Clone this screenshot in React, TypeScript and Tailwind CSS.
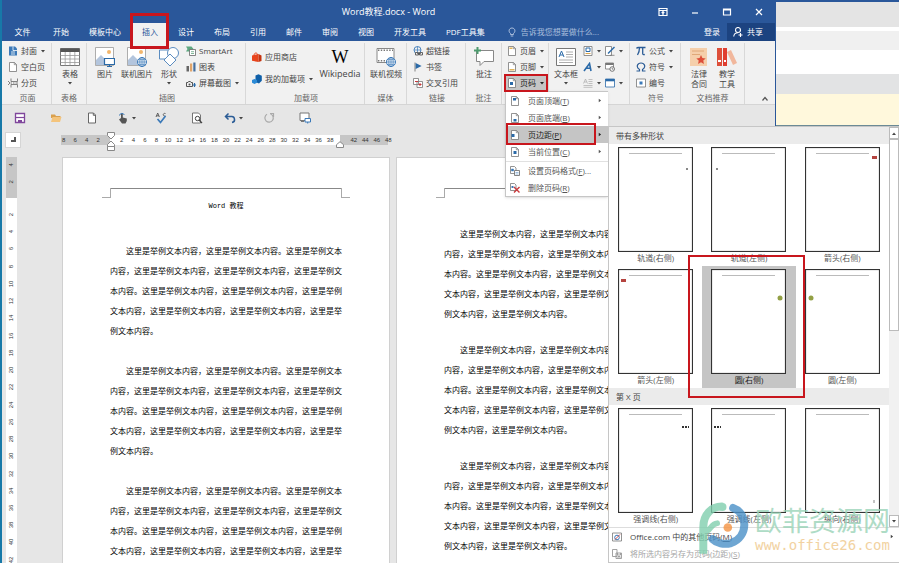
import type { ReactNode } from 'react';
import clsx from 'clsx';

const S = '这里是举例文本内容';
const PARAGRAPH = '，。，，，。，，，，，'.split('').map((p) => S + p).join('');

function Caret({ className }: { className?: string }) {
  return (
    <svg viewBox="0 0 4 3" className={clsx('h-[3px] w-1 shrink-0', className)}>
      <path d="M0 0h4L2 2.6z" fill="currentColor" />
    </svg>
  );
}

function Icon({ children, big }: { children: ReactNode; big?: boolean }) {
  return (
    <svg viewBox={big ? '0 0 20 20' : '0 0 10 10'} className={clsx('shrink-0', big ? 'size-5' : 'size-[10px]')} fill="none">
      {children}
    </svg>
  );
}

function PageIcon({ mark, color = '#2b6aa8' }: { mark?: string; color?: string }) {
  return (
    <Icon>
      <path d="M1.5.5h5l2 2v7h-7z" fill="#fff" stroke="#777" strokeWidth=".8" />
      <path d="M6.3.6v2.1h2.2" stroke="#777" strokeWidth=".7" />
      {mark && <path d={mark} fill={color} />}
    </Icon>
  );
}

const coverIcon = (
  <Icon>
    <path d="M1 .5h6l2 2v7H1z" fill="#3b79b8" />
    <path d="M5 .5v4h4M3 6h4M3 8h4" stroke="#fff" strokeWidth=".8" />
  </Icon>
);

const breakIcon = (
  <Icon>
    <path d="M3 .5v3h6.500v-3M3 9.500v-3h6.500v3M2.500 5h1.500M5 5h1.500M7.500 5h2.500M0 3l2 2-2 2" stroke="#666" strokeWidth=".8" />
  </Icon>
);

const tableIcon = (
  <Icon big>
    <path d="M.5 1.5h19v17H.5z" fill="#fff" stroke="#777" />
    <path d="M.5 1.5h19v3.5H.5z" fill="#555" />
    <path d="M.5 8.5h19M.5 12h19M.5 15.5h19M5.2 5v13.5M10 5v13.5M14.8 5v13.5" stroke="#999" strokeWidth=".8" />
  </Icon>
);

const pictureBase = (
  <>
    <path d="M.5.5h18v18H.5z" fill="#fff" stroke="#999" strokeWidth=".8" />
    <circle cx="14" cy="5" r="2" fill="#f2b66c" />
    <path d="M1 18V13l5-5 6 6 2 4z" fill="#b3c5dd" />
  </>
);

const pictureIcon = (
  <Icon big>
    {pictureBase}
    <path d="M9.5 11.5h10v6h-10z" fill="#fff" stroke="#2b6aa8" strokeWidth="1.2" />
    <path d="M14.5 17.5v2M12 19.5h5" stroke="#2b6aa8" />
  </Icon>
);

const globe = (
  <>
    <circle cx="15" cy="15" r="4.5" fill="#fff" stroke="#3b79b8" />
    <path d="M10.5 15h9M15 10.5v9M11.5 12.7h7M11.5 17.3h7" stroke="#3b79b8" strokeWidth=".7" />
    <ellipse cx="15" cy="15" rx="2.2" ry="4.5" stroke="#3b79b8" strokeWidth=".7" />
  </>
);

const onlinePictureIcon = (
  <Icon big>
    {pictureBase}
    {globe}
  </Icon>
);

const shapesIcon = (
  <Icon big>
    <path d="M.5 3h9v9h-9z" fill="#fff" stroke="#5b8cc0" />
    <circle cx="14" cy="6" r="5.5" fill="#fff" stroke="#5b8cc0" />
    <path d="m11 7 6 6-6 6-6-6z" fill="#fff" stroke="#5b8cc0" />
  </Icon>
);

const smartArtIcon = (
  <Icon>
    <path d="M0 .5h5.500L7.500 3 5 5.500H0L1.500 3z" fill="#5ea880" />
    <path d="M3.500 3.500h6v6h-6z" fill="#fff" stroke="#666" strokeWidth=".8" />
    <path d="M5 5.700h3M5 7.500h3" stroke="#4e9a6e" strokeWidth=".7" />
  </Icon>
);

const chartIcon = (
  <Icon>
    <path d="M.5 4H3v5.5H.5z" fill="#666" />
    <path d="M4 1.5h2.2v8H4z" fill="#e0a56b" />
    <path d="M7.3.5h2.2v9H7.3z" fill="#456f9e" />
  </Icon>
);

const captureIcon = (
  <Icon>
    <path d="M.5 4.5h1.5l.6-1h1.8l.6 1H6.5v4h-6z" stroke="#555" />
    <circle cx="3.5" cy="6.5" r="1" fill="#555" />
    <path d="M8.500 5v4M6.700 7h3.300" stroke="#2b6aa8" strokeWidth="1.2" />
  </Icon>
);

const storeIcon = (
  <Icon>
    <path d="M0 3.5 6.5 2v8L0 8.8z" fill="#e8441c" />
    <path d="M6.5 2 9.5 3.5V9l-3 1z" fill="#c4330f" />
    <path d="M2 3.5C2 .3 5.5.3 5.5 2.8" stroke="#e8441c" />
  </Icon>
);

const addinIcon = (
  <Icon>
    <path d="m3.5 1.5 3-1.3L9.8 1.8v5L7 9.5 3.5 8z" fill="#0f5fa8" />
    <path d="m0 6 2.5-1L5 6v2.7L2.5 9.9 0 8.7z" fill="#2b8ad6" />
  </Icon>
);

const videoIcon = (
  <Icon big>
    <path d="M1 1.5h17v14H1z" fill="#fff" stroke="#888" />
    <path d="M2 3.200h15M2 13.800h15" stroke="#777" strokeWidth="1.400" strokeDasharray="1.400 1.400" />
    {globe}
  </Icon>
);

const linkIcon = (
  <Icon>
    <circle cx="4.5" cy="4" r="3.5" stroke="#3b79b8" strokeWidth=".9" />
    <path d="M1 4h7M4.5.5v7" stroke="#3b79b8" strokeWidth=".7" />
    <path d="M2.5 6.5h3v2.5h-3zM6.5 6.5h3v2.5h-3zM4 7.7h4" fill="#f1f1f1" stroke="#555" strokeWidth=".9" />
  </Icon>
);

const bookmarkIcon = (
  <Icon>
    <path d="M2 .5v9" stroke="#777" strokeWidth=".9" />
    <path d="m2.6 1 6 3-6 3z" fill="#2b6aa8" />
  </Icon>
);

const crossRefIcon = (
  <Icon>
    <path d="M.5.5h5v6h-5zM4 3.5h5.5v6H4z" fill="#fff" stroke="#777" strokeWidth=".8" />
    <path d="M2 3.5h3M5.5 6.5h3M7 5v3" stroke="#c8383b" />
  </Icon>
);

const commentIcon = (
  <Icon big>
    <path d="M2.5 3.500h17v11H10l-4 4v-4H2.500z" fill="#fff" stroke="#888" />
    <path d="M3.500 0v7M0 3.500h7" stroke="#4e9a6e" strokeWidth="2" />
  </Icon>
);

const textBoxIcon = (
  <Icon big>
    <path d="M.5 1.5h19v17H.5z" fill="#fff" stroke="#777" />
    <path d="m3 10 2.5-6L8 10M3.9 8h3.2" stroke="#2b6aa8" />
    <path d="M10 5h7M10 7.5h7M10 10h7M3 13h14M3 15.5h14" stroke="#999" strokeWidth=".8" />
  </Icon>
);

const quickPartsIcon = (
  <Icon>
    <path d="M1 .5h8v9H1z" fill="#fff" stroke="#777" strokeWidth=".8" />
    <path d="M3 2h4v3.5H3z" stroke="#2b6aa8" />
    <path d="M2.5 7.5h5" stroke="#d8a24a" />
  </Icon>
);

const wordArtIcon = (
  <Icon>
    <path d="M1 9 6.5 1.5 8 9M3.2 6.3h4.3" stroke="#2b6aa8" strokeWidth="1.6" />
  </Icon>
);

const dropCapIcon = (
  <Icon>
    <path d="m.5 5.5 2-4.5 2 4.5M1.3 4h2.4M5.5 1.5h4M5.5 3.5h4M5.5 5.5h4M.5 7.5h9M.5 9.3h9" stroke="#aaa" strokeWidth=".7" />
  </Icon>
);

const signatureIcon = (
  <Icon>
    <path d="M.5.5h6v9h-6z" fill="#fff" stroke="#777" strokeWidth=".8" />
    <path d="M3 7.5 9.5 1" stroke="#2b6aa8" strokeWidth="1.5" />
    <path d="M5 9.3h4.5" stroke="#777" strokeWidth=".8" />
  </Icon>
);

const dateIcon = (
  <Icon>
    <path d="M.5 1h8v6h-8z" fill="#fff" stroke="#777" strokeWidth=".8" />
    <path d="M.5 1h8v2h-8z" fill="#777" />
    <circle cx="7.2" cy="7" r="2.3" fill="#fff" stroke="#555" strokeWidth=".8" />
    <path d="M7.2 5.7v1.5h1.2" stroke="#555" strokeWidth=".7" />
  </Icon>
);

const objectIcon = (
  <Icon>
    <path d="M.5 1h9v8h-9z" fill="#fff" stroke="#2b6aa8" strokeWidth=".8" />
    <path d="M.5 1h9v2.3h-9z" fill="#2b6aa8" />
  </Icon>
);

const piIcon = (
  <Icon>
    <path d="M.5 2.5Q1 1.5 2.5 1.5H9.5M3.5 1.5Q3.5 6 1.5 9M6.7 1.5V7.5Q6.7 9 8.8 8.5" stroke="#2b5c96" strokeWidth="1.3" />
  </Icon>
);

const omegaIcon = (
  <Icon>
    <path d="M.5 9h3V7.5C-.5 5 1.5 1 5 1s5.5 4 1.5 6.5V9h3" stroke="#2b5c96" strokeWidth="1.2" />
  </Icon>
);

const numberIcon = (
  <Icon>
    <path d="M.5 1h9v8h-9z" fill="#fff" stroke="#777" strokeWidth=".8" />
    <path d="M3.5 3.5h3v3h-3z" fill="#3b79b8" />
  </Icon>
);

const contractIcon = (
  <Icon big>
    <path d="M1 1h17v18H1z" fill="#f5cfab" />
    <path d="M3 4h12M3 7.5h8" stroke="#e0a878" />
    <path d="m12 8 1.4 3 3.3.4-2.4 2.2.6 3.3-2.9-1.6-2.9 1.6.6-3.3-2.4-2.2 3.3-.4z" fill="#dd4f3a" />
  </Icon>
);

const teachIcon = (
  <Icon big>
    <path d="M0 1h5v18H0z" fill="#dd4f3a" />
    <path d="M6 1h4v18H6z" fill="#e03e30" />
    <path d="M1 14h3M7 14h2" stroke="#fff" strokeWidth="2" />
    <path d="m10 5 4-2 6 13-4 2z" fill="#f1b79c" />
  </Icon>
);

const pageNumberItems = [
  { text: '页面顶端', hotkey: 'T', mark: 'M3 2h3v2.5H3z' },
  { text: '页面底端', hotkey: 'B', mark: 'M3.5 6h3v2.5h-3z' },
  { text: '页边距', hotkey: 'P', mark: 'M1.5 4h3v3h-3z', active: true },
  { text: '当前位置', hotkey: 'C', mark: 'M3.5 4h3v3h-3z' },
];

function Hotkey({ text, hotkey, tail }: { text: string; hotkey: string; tail?: string }) {
  return (
    <span>
      {text}(<u>{hotkey}</u>){tail}
    </span>
  );
}

const shapeThumbs = [
  { label: '轨道(右侧)', mark: <path d="M68 21h2v2h-2z" fill="#888" /> },
  { label: '轨道(左侧)', mark: <path d="M5 21h2v2H5z" fill="#888" /> },
  { label: '箭头(右侧)', mark: <path d="M67 9h5v3h-5z" fill="#b5433f" /> },
  { label: '箭头(左侧)', mark: <path d="M3 10h5v3H3z" fill="#b5433f" /> },
  { label: '圆(右侧)', mark: <circle cx="69" cy="29" r="2.5" fill="#93a045" />, active: true },
  { label: '圆(左侧)', mark: <circle cx="6" cy="29" r="2.5" fill="#93a045" /> },
];

const pageXThumbs = [
  { label: '强调线(右侧)', mark: <path d="M64 19h7" stroke="#333" strokeWidth="2" strokeDasharray="2 1" /> },
  { label: '强调线(左侧)', mark: <path d="M3 19h7" stroke="#333" strokeWidth="2" strokeDasharray="2 1" /> },
  { label: '纵向(右侧)', mark: <path d="M69 92v3" stroke="#888" /> },
];

function Thumb({ label, mark, active }: { label: string; mark: ReactNode; active?: boolean }) {
  return (
    <button className={clsx('relative flex h-[122px] flex-col items-center pt-[3px] leading-3', active ? 'bg-[#c5c5c5] text-[#222]' : 'text-[#555]')}>
      <svg viewBox="0 0 75 105" className="h-[105px] w-[75px]">
        <rect x=".5" y=".5" width="74" height="104" fill="#fff" stroke="#333" strokeWidth="1.2" />
        <path d="M11 6.5h53" stroke="#bbb" />
        {mark}
      </svg>
      {label}
      {active && <span className="absolute -top-[11px] -left-[14px] z-10 h-[143px] w-[117px] border-2 border-[#c8161d]" />}
    </button>
  );
}

function Gallery() {
  return (
    <div className="absolute top-0 left-full w-[291px] border border-r-0 border-[#c6c6c6] bg-white text-[#444]">
      <div className="flex">
        <div className="flex-1">
          <h3 className="h-[17px] bg-[#ebebeb] px-[7px] leading-[17px]">带有多种形状</h3>
          <div className="grid grid-cols-3">
            {shapeThumbs.map((t) => <Thumb key={t.label} {...t} />)}
          </div>
          <h3 className="h-[17px] bg-[#ebebeb] px-[7px] leading-[17px]">第 X 页</h3>
          <div className="grid grid-cols-3">
            {pageXThumbs.map((t) => <Thumb key={t.label} {...t} />)}
          </div>
        </div>
        <div className="flex w-[10px] flex-col bg-[#f1f1f1]">
          <button aria-label="向上" className="flex h-3 items-center justify-center border border-[#bbb] bg-white">
            <Caret className="rotate-180" />
          </button>
          <div className="h-[192px] border border-[#bbb] bg-white" />
          <button aria-label="向下" className="mt-auto flex h-3 items-center justify-center border border-[#bbb] bg-white">
            <Caret />
          </button>
        </div>
      </div>
      <div className="border-t border-[#ddd] px-[3px]">
        <button className="flex h-[17px] w-full items-center gap-2">
          <Icon>
            <path d="M.5 1h9v8h-9z" fill="#fff" stroke="#777" strokeWidth=".8" />
            <circle cx="5" cy="5.5" r="2.3" stroke="#3b79b8" />
            <path d="m3 7.5 5-5" stroke="#c8383b" strokeWidth=".9" />
          </Icon>
          <Hotkey text="Office.com 中的其他页码" hotkey="M" />
          <Caret className="mr-[2px] ml-auto -rotate-90" />
        </button>
        <button className="flex h-[17px] w-full items-center gap-2 text-[#a5a5a5]">
          <Icon>
            <path d="M.5.5h4.500v7H.5zM4 4h5.500v5.500H4zM5.500 4v2h3V4M6 9V7.500h2V9" stroke="#999" strokeWidth=".9" />
          </Icon>
          <Hotkey text="将所选内容另存为页码(边距)" hotkey="S" />
        </button>
      </div>
    </div>
  );
}

function PageNumberMenu() {
  return (
    <ul className="absolute top-4 left-0 z-20 w-[103px] border border-r-0 border-[#c6c6c6] bg-white text-[#555] shadow-sm">
      {pageNumberItems.map((item) => (
        <li key={item.text} className="relative">
          <button className={clsx('flex h-[17px] w-full items-center gap-2 pl-1', item.active && 'bg-[#c5c5c5] text-[#222]')}>
            <PageIcon mark={item.mark} />
            <Hotkey text={item.text} hotkey={item.hotkey} />
            <Caret className="mr-[6px] ml-auto -rotate-90" />
          </button>
          {item.active && (
            <>
              <span className="absolute -top-[3px] left-0 h-[22px] w-[90px] border-2 border-[#c8161d]" />
              <Gallery />
            </>
          )}
        </li>
      ))}
      <li className="mt-px border-t border-[#e1e1e1]">
        <button className="flex h-[17px] w-full items-center gap-2 pl-1">
          <Icon>
            <path d="M.5.5h4l1.5 1.5V7.500H.5z" fill="#fff" stroke="#777" strokeWidth=".8" />
            <path d="M4.5 4.5h5v5h-5z" fill="#fff" stroke="#666" strokeWidth=".8" />
            <path d="M1.500 3h2v2h-2zM5.500 6.500h3M5.500 8h3" fill="#3b79b8" stroke="#3b79b8" strokeWidth=".5" />
          </Icon>
          <Hotkey text="设置页码格式" hotkey="F" tail="..." />
        </button>
      </li>
      <li>
        <button className="flex h-[17px] w-full items-center gap-2 pl-1">
          <Icon>
            <path d="M.5.5h4l1.5 1.5V7.500H.5z" fill="#fff" stroke="#777" strokeWidth=".8" />
            <path d="M1.500 3h2v2h-2z" fill="#3b79b8" />
            <path d="m4 4 5.500 5.500M9.500 4 4 9.500" stroke="#c8383b" strokeWidth="1.400" />
          </Icon>
          <Hotkey text="删除页码" hotkey="R" />
        </button>
      </li>
    </ul>
  );
}

function Row({ icon, text, caret }: { icon: ReactNode; text?: string; caret?: boolean }) {
  return (
    <button aria-label={text ? undefined : '更多'} className="flex h-4 items-center gap-[3px] whitespace-nowrap">
      {icon}
      {text}
      {caret && <Caret className="ml-px" />}
    </button>
  );
}

function BigButton({ icon, text, caret, className }: { icon: ReactNode; text: ReactNode; caret?: boolean; className?: string }) {
  return (
    <button className={clsx('flex h-12 flex-col items-center pt-1 leading-[10px] whitespace-nowrap', className)}>
      {icon}
      <span className="mt-[2px]">{text}</span>
      {caret && <Caret className="mt-[3px]" />}
    </button>
  );
}

function Group({ label, className, children }: { label?: string; className: string; children: ReactNode }) {
  return (
    <section className={clsx('flex shrink-0 flex-col border-r border-[#d8d8d8]', className)}>
      <div className="flex h-12">{children}</div>
      <div className="-ml-1 text-center leading-[14px] text-[#666]">{label}</div>
    </section>
  );
}

function Ribbon() {
  return (
    <div className="flex h-16 border-b border-[#d5d5d5] bg-[#f1f1f1] pt-[2px] text-[#444]">
      <Group label="页面" className="w-[50px] pl-[6px]">
        <div>
          <Row icon={coverIcon} text="封面" caret />
          <Row icon={<PageIcon />} text="空白页" />
          <Row icon={breakIcon} text="分页" />
        </div>
      </Group>
      <Group label="表格" className="w-[35px] pl-1">
        <BigButton icon={tableIcon} text="表格" caret className="w-7" />
      </Group>
      <Group label="插图" className="w-[159px] pl-[6px]">
        <BigButton icon={pictureIcon} text="图片" className="w-6" />
        <BigButton icon={onlinePictureIcon} text="联机图片" className="w-10" />
        <BigButton icon={shapesIcon} text="形状" caret className="w-6" />
        <div className="pl-[5px]">
          <Row icon={smartArtIcon} text="SmartArt" />
          <Row icon={chartIcon} text="图表" />
          <Row icon={captureIcon} text="屏幕截图" caret />
        </div>
      </Group>
      <Group label="加载项" className="w-[119px] pl-[6px]">
        <div className="flex w-[62px] flex-col gap-[6px] pt-[6px]">
          <Row icon={storeIcon} text="应用商店" />
          <Row icon={addinIcon} text="我的加载项" caret />
        </div>
        <BigButton
          icon={<span className="flex h-5 items-center font-['Liberation_Serif',serif] text-lg text-black">W</span>}
          text={<span className="text-[9px]">Wikipedia</span>}
          className="ml-1 w-[44px]"
        />
      </Group>
      <Group label="媒体" className="w-[42px] pl-1">
        <BigButton icon={videoIcon} text="联机视频" className="w-[34px]" />
      </Group>
      <Group label="链接" className="w-[59px] pl-[6px]">
        <div>
          <Row icon={linkIcon} text="超链接" />
          <Row icon={bookmarkIcon} text="书签" />
          <Row icon={crossRefIcon} text="交叉引用" />
        </div>
      </Group>
      <Group label="批注" className="w-9 pl-1">
        <BigButton icon={commentIcon} text="批注" className="w-7" />
      </Group>
      <Group className="w-[47px] pl-[3px]">
        <div className="w-[42px]">
          <div className="pl-[2px]">
            <Row icon={<PageIcon mark="M2.5 1.5h3V3h-3z" color="#e0b45a" />} text="页眉" caret />
            <Row icon={<PageIcon mark="M2.5 7h5v1.5h-5z" color="#e0b45a" />} text="页脚" caret />
          </div>
          <div className="relative bg-[#c5c5c5] pl-[2px] text-[#222]">
            <Row icon={<PageIcon mark="M3 4h3v3H3z" />} text="页码" caret />
            <span className="absolute -inset-px z-30 border-2 border-[#c8161d]" />
            <PageNumberMenu />
          </div>
        </div>
      </Group>
      <Group className="w-[81px] pl-1">
        <BigButton icon={textBoxIcon} text="文本框" caret className="w-[26px]" />
        <div className="ml-1">
          <Row icon={quickPartsIcon} caret />
          <Row icon={wordArtIcon} caret />
          <Row icon={dropCapIcon} caret />
        </div>
        <div className="ml-1">
          <Row icon={signatureIcon} caret />
          <Row icon={dateIcon} />
          <Row icon={objectIcon} caret />
        </div>
      </Group>
      <Group label="符号" className="w-[51px] pl-[6px]">
        <div>
          <Row icon={piIcon} text="公式" caret />
          <Row icon={omegaIcon} text="符号" caret />
          <Row icon={numberIcon} text="编号" />
        </div>
      </Group>
      <Group label="文档推荐" className="w-16 pl-1">
        <BigButton icon={contractIcon} text={<>法律<br />合同</>} className="w-7" />
        <BigButton icon={teachIcon} text={<>教学<br />工具</>} className="w-7" />
      </Group>
      <button aria-label="折叠功能区" className="mt-auto mr-[6px] mb-[2px] ml-auto">
        <svg viewBox="0 0 8 6" className="h-[6px] w-2" fill="none">
          <path d="m1.5 4.5 2.5-3 2.5 3" stroke="#555" strokeWidth="1.2" />
        </svg>
      </button>
    </div>
  );
}

const tabsAfter = ['设计', '布局', '引用', '邮件', '审阅', '视图', '开发工具', 'PDF工具集'];

function Header() {
  return (
    <header className="bg-[#2a579a] text-white">
      <div className="flex h-[23px] items-center">
        <div className="flex-1" />
        <h1 className="text-[9px]">Word教程.docx - Word</h1>
        <div className="flex flex-1 justify-end">
          {[
            ['功能区显示选项', 'M1 1.5h8v7H1zM1 3.5h8M5 8V5M3.7 6 5 4.7 6.3 6'],
            ['最小化', 'M2 6h6'],
            ['最大化', 'M1.5 2h7v6h-7zM1.5 3h7'],
            ['关闭', 'm2 2 6 6M8 2 2 8'],
          ].map(([name, d]) => (
            <button key={name} aria-label={name} className="flex w-8 justify-center">
              <Icon><path d={d} stroke="#fff" strokeWidth="1.2" /></Icon>
            </button>
          ))}
        </div>
      </div>
      <div className="flex h-[18px] leading-[18px] whitespace-nowrap">
        <button className="w-[41px]">文件</button>
        <button className="px-[10px]">开始</button>
        <button className="px-[10px]">模板中心</button>
        <button className="relative ml-px bg-[#f1f1f1] px-[10px] text-[#2a579a]">
          插入
          <span className="absolute -top-[10px] -right-px -bottom-2 -left-[2px] border-[3px] border-[#c8161d]" />
        </button>
        {tabsAfter.map((t) => (
          <button key={t} className="px-[10px]">{t}</button>
        ))}
        <label className="ml-3 flex flex-1 items-center gap-1 text-[#b5c7e2]">
          <Icon>
            <path d="M3.5 6.5C1 4.5 2 1 5 1s4 3.5 1.5 5.5V7.500h-3zM3.700 9h2.600" stroke="currentColor" strokeWidth=".9" />
          </Icon>
          <input aria-label="操作说明搜索" placeholder="告诉我您想要做什么..." className="w-full min-w-0 bg-transparent outline-none placeholder:text-[#a9bedc]" />
        </label>
        <button className="px-[7px]">登录</button>
        <button className="flex w-12 items-center gap-1 bg-[#1c4380] pl-[6px]">
          <Icon>
            <circle cx="5" cy="3" r="2.5" stroke="#fff" strokeWidth="1.1" />
            <path d="M.7 9.5C1 7 3 5.7 5 5.7M7.5 6v4M5.500 8h4" stroke="#fff" strokeWidth="1.1" />
          </Icon>
          共享
        </button>
      </div>
    </header>
  );
}

function Tool({ name, narrow, caret, children }: { name: string; narrow?: boolean; caret?: boolean; children: ReactNode }) {
  return (
    <button aria-label={name} className={clsx('flex items-center justify-center gap-[3px]', narrow ? 'w-[33px]' : 'w-9')}>
      <svg viewBox="0 0 12 12" className="size-3" fill="none">{children}</svg>
      {caret && <Caret />}
    </button>
  );
}

function QuickAccess() {
  return (
    <div className="flex h-[26px] text-[#444]">
      <Tool name="保存">
        <path d="M1.5 1.5h9v9h-9z" fill="#fff" stroke="#80479c" strokeWidth="1.3" />
        <path d="M1.5 5.5h9" stroke="#80479c" strokeWidth="1.2" />
        <path d="M4 8h4v3H4z" fill="#80479c" />
      </Tool>
      <Tool name="打开">
        <path d="M1 2.5h4l1 1.5h4.5V6H1z" fill="#d9a04e" />
        <path d="M2.5 5h9L10 10H1z" fill="#f4c47c" />
      </Tool>
      <Tool name="新建">
        <path d="M2.5 1h5l2 2v8h-7z" fill="#fff" stroke="#666" />
        <path d="M7.3 1v2.3h2.2" stroke="#666" />
      </Tool>
      <Tool name="触摸模式" narrow caret>
        <path d="M4 6V1.5h1.8V5.5l4 1V9L8.5 11.5H5L2 7.5z" fill="#555" />
        <path d="M2.5 3.5A2.5 2.5 0 0 1 7.3 3" stroke="#3b79b8" />
      </Tool>
      <Tool name="拼写检查">
        <path d="m1 5 1.7-4 1.7 4M1.5 3.8h2.5M10.5 1.5C8 .5 7 4.5 10.5 4" stroke="#555" strokeWidth=".9" />
        <path d="m2.5 7 3 3.5L10.5 4" stroke="#3b79b8" strokeWidth="1.7" />
      </Tool>
      <Tool name="打印预览">
        <path d="M1.5 1h6l2 2v8h-8z" fill="#fff" stroke="#666" strokeWidth=".9" />
        <circle cx="6.5" cy="6.5" r="2.2" fill="#fff" stroke="#444" />
        <path d="m8 8 3 3" stroke="#444" strokeWidth="1.3" />
      </Tool>
      <Tool name="撤消" caret>
        <path d="M4.5 1.5 1.5 4.5l3 3M1.8 4.5H7a3 3 0 0 1 1 6" stroke="#2b5c96" strokeWidth="1.5" />
      </Tool>
      <Tool name="重复">
        <path d="M7.5 2A4.2 4.2 0 1 1 4 2.3M7 1.5h3.5V5" stroke="#aaa" strokeWidth="1.2" />
      </Tool>
      <Tool name="阅读">
        <path d="M1 1h9v7.5H1z" fill="#fff" stroke="#777" />
        <path d="M6 6.5h5.5v3.5H6zM8.7 10v1.5" fill="#fff" stroke="#3b79b8" />
        <path d="M2 9.5h3" stroke="#777" />
      </Tool>
    </div>
  );
}

const evens = (count: number, from = 2) => Array.from({ length: count }, (_, i) => from + i * 2);

function HorizontalRuler() {
  return (
    <div className="relative ml-10 flex h-[10px] text-center font-['Liberation_Sans',sans-serif] text-[6px] leading-[10px] text-[#333]">
      <div className="flex w-[49px] justify-end bg-[#c6c6c6]">
        <div className="mr-[6px] grid w-[46px] shrink-0 grid-cols-4">
          {evens(4).reverse().map((n) => <span key={n}>{n}</span>)}
        </div>
      </div>
      <div className="grid w-[230px] bg-white pl-[6px] pr-1" style={{ gridTemplateColumns: 'repeat(19, minmax(0, 1fr))' }}>
        {evens(19).map((n) => <span key={n}>{n}</span>)}
      </div>
      <div className="w-12 bg-[#c6c6c6] pl-2">
        <div className="grid w-[46px] grid-cols-4">
          {evens(4, 42).map((n) => <span key={n}>{n}</span>)}
        </div>
      </div>
      <svg viewBox="0 0 8 20" className="absolute -top-[3px] left-[46px] h-5 w-2" fill="#fff" stroke="#888">
        <path d="M.5.5h7v3L4 7 .5 3.5zM4 9l3.5 3.500v2h-7v-2zM.5 14.500h7v4h-7z" />
      </svg>
      <svg viewBox="0 0 8 7" className="absolute top-[6px] left-[275px] h-[7px] w-2" fill="#fff" stroke="#888">
        <path d="m4 .7 3.5 3v2.800h-7V3.700z" />
      </svg>
    </div>
  );
}

function VerticalNumber({ n }: { n: number }) {
  return (
    <span className="flex flex-1 rotate-180 [writing-mode:vertical-rl]">
      <span className="m-auto">{n}</span>
    </span>
  );
}

function VerticalRuler() {
  return (
    <div className="ml-1 flex w-[11px] shrink-0 flex-col font-['Liberation_Sans',sans-serif] text-[6px] leading-[11px] text-[#333]">
      <div className="flex h-[41px] shrink-0 flex-col bg-[#c6c6c6] pb-2">
        {[4, 2].map((n) => <VerticalNumber key={n} n={n} />)}
      </div>
      <div className="flex h-[387px] shrink-0 flex-col bg-white pt-2">
        {evens(22).map((n) => <VerticalNumber key={n} n={n} />)}
      </div>
    </div>
  );
}

function Page({ title, ending, gap, paddingTop }: { title?: string; ending: string; gap: string; paddingTop: string }) {
  return (
    <article className="w-[328px] shrink-0 border border-b-0 border-[#d0d0d0] bg-white pt-[30px] text-black">
      <div className="flex h-[10px] px-[39px]">
        <div className="w-[9px] border-r border-b border-[#aaa]" />
        <div className="flex-1 border-t border-[#888]" />
        <div className="w-[9px] border-b border-l border-[#aaa]" />
      </div>
      <div className="h-4 text-center font-['Liberation_Mono','Noto_Sans_CJK_SC',monospace] text-[7px] leading-4">{title}</div>
      <div className={clsx('flex flex-col px-[47px] leading-5', gap, paddingTop)}>
        {[0, 1, 2].map((i) => (
          <p key={i} className="indent-4">{PARAGRAPH + ending}</p>
        ))}
      </div>
    </article>
  );
}

function Watermark() {
  return (
    <div className="pointer-events-none absolute right-[9px] bottom-2 z-40 flex items-center gap-1 opacity-80">
      <svg viewBox="0 0 160 160" className="size-[53px]" fill="none">
        <path d="M76 14C40 12 16 38 16 76V156" stroke="#80cfae" strokeWidth="24" />
        <circle cx="74" cy="15" r="12" fill="#80cfae" />
        <path d="M18 90C40 90 36 66 58 64" stroke="#80cfae" strokeWidth="17" strokeLinecap="round" />
        <path d="M106 18C152 34 152 106 100 124C78 130 56 124 44 112" stroke="#4b90c8" strokeWidth="24" strokeLinecap="round" />
        <circle cx="90" cy="77" r="13" fill="#f59342" />
      </svg>
      <div className="font-['Noto_Sans_CJK_SC',sans-serif]">
        <div className="text-[27px] leading-8 text-[#9bd4b8]">欧菲资源网</div>
        <div className="font-['DejaVu_Sans_Mono',monospace] text-sm leading-[18px] text-[#efc88a]">www.office26.com</div>
      </div>
    </div>
  );
}

export default function App() {
  return (
    <div className="relative flex h-screen overflow-hidden bg-white font-['Open_Sans','Noto_Sans_CJK_SC',sans-serif] text-[8px]" lang="zh-CN">
      <main className="flex min-w-0 flex-1 flex-col border-l-2 border-[#1779a8] bg-[#e6e6e6]">
        <Header />
        <Ribbon />
        <QuickAccess />
        <div className="flex h-[17px] items-center pl-[3px]">
          <button aria-label="制表符" className="flex h-4 w-4 items-center justify-center border border-[#d5d5d5] bg-white">
            <span className="size-[5px] border-r-2 border-b-2 border-[#555]" />
          </button>
          <HorizontalRuler />
        </div>
        <div className="flex min-h-0 flex-1 overflow-hidden pt-[9px]">
          <VerticalRuler />
          <div className="ml-[45px] flex gap-[6px]">
            <Page title="Word 教程" ending={`${S}。`} gap="gap-5" paddingTop="pt-[27px]" />
            <Page ending={`${S}，${S}。`} gap="gap-4" paddingTop="pt-[10px]" />
          </div>
        </div>
      </main>
      <aside className="flex w-[124px] shrink-0 flex-col border-t-2 border-l border-[#2a579a] bg-white">
        <div className="h-[25px] bg-[#e4e4e4]" />
        <div className="mt-1 h-[19px] bg-[#f0f0f0]" />
        <div className="mt-6 h-5 bg-[#e2e3e4]" />
        <div className="h-8 border-b border-[#6b8a96] bg-[#fff8dc]" />
      </aside>
      <Watermark />
    </div>
  );
}
